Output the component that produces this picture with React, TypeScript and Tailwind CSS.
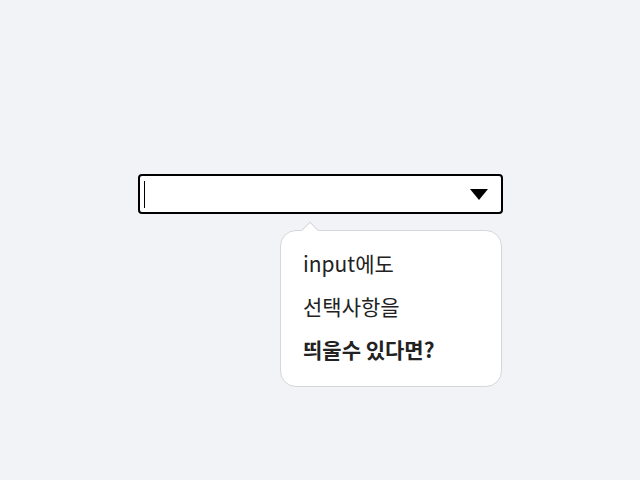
import React from "react";

export default function App() {
  return (
    <div
      className="w-[640px] h-[480px] bg-[#f2f3f7] pt-[174px]"
      style={{ fontFamily: '"Noto Sans CJK KR", "Noto Sans", sans-serif' }}
    >
      <div className="w-[365px] ml-[138px]">
        <div className="h-[40px] bg-white border-2 border-black rounded-[4px] flex items-center pl-[4px] pr-[13px]">
          <div className="w-px h-[27px] bg-black" />
          <div className="ml-auto w-0 h-0 border-l-[9px] border-r-[9px] border-t-[11px] border-l-transparent border-r-transparent border-t-black" />
        </div>
        <div className="relative mt-[16px] ml-auto mr-[1px] w-[222px] h-[157px] bg-white border border-[#d6d7db] rounded-[16px] pt-[11px] px-[22px] text-[21px] leading-[43px] text-[#222]">
          <div className="absolute -top-[7px] left-[23px] w-[12px] h-[12px] bg-white border-t border-l border-[#d6d7db] rotate-45" />
          <div className="relative">input에도</div>
          <div>선택사항을</div>
          <div className="font-bold">띄울수 있다면?</div>
        </div>
      </div>
    </div>
  );
}
